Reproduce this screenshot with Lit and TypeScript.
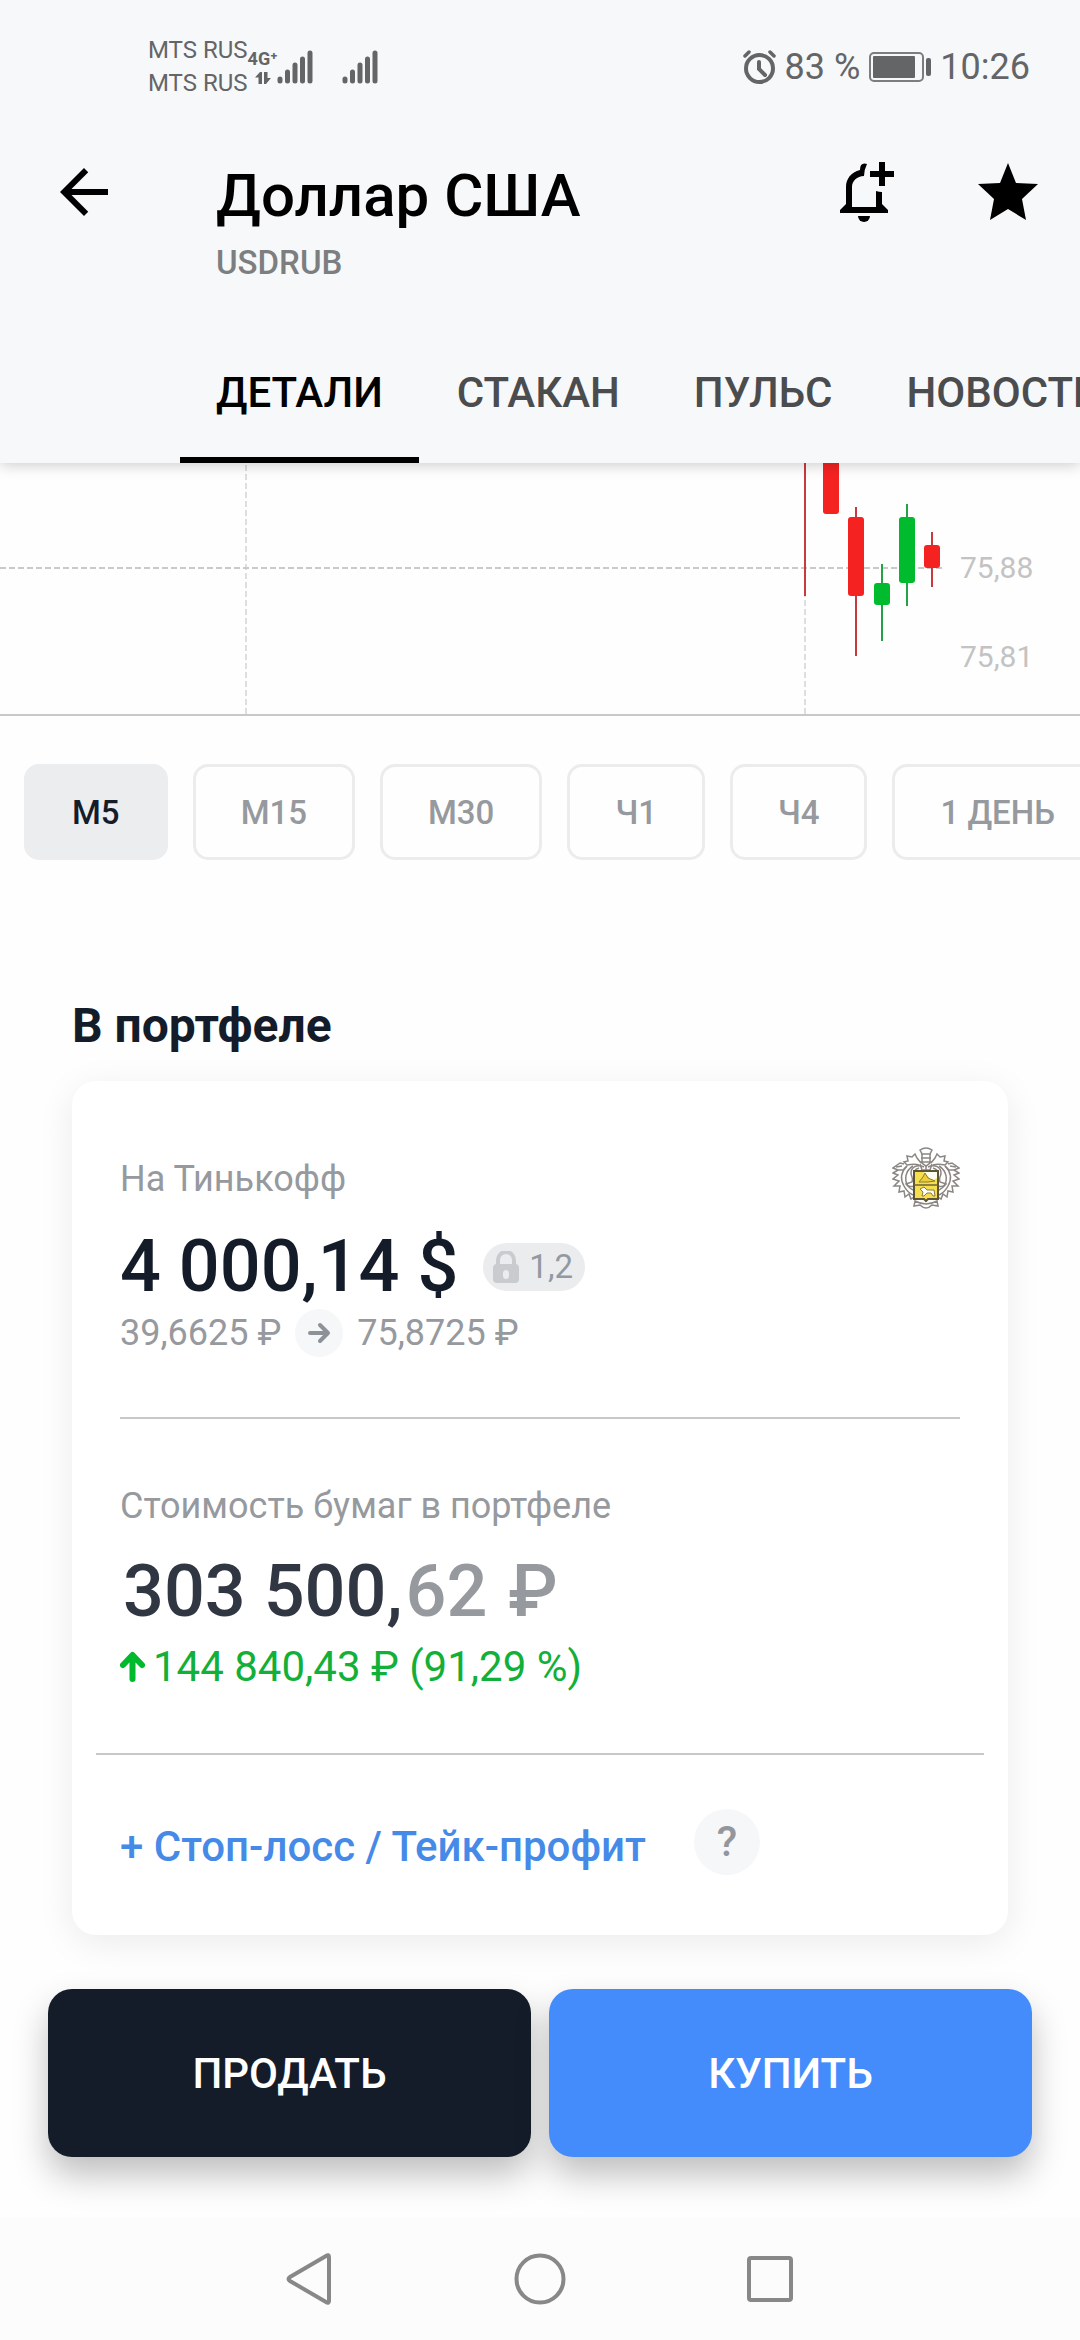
import { LitElement, html, svg, css } from 'lit';
import { customElement, property, state } from 'lit/decorators.js';
import { classMap } from 'lit/directives/class-map.js';

interface Candle {
  x: number;
  high: number;
  low: number;
  top?: number;
  bottom?: number;
  up?: boolean;
}

const TABS = ['ДЕТАЛИ', 'СТАКАН', 'ПУЛЬС', 'НОВОСТИ'];
const INTERVALS = ['M5', 'M15', 'M30', 'Ч1', 'Ч4', '1 ДЕНЬ'];

const CANDLES: Candle[] = [
  { x: 805, high: 0, low: 133 },
  { x: 831, high: 0, low: 40, top: -10, bottom: 51 },
  { x: 856, high: 44, low: 193, top: 54, bottom: 133 },
  { x: 882, high: 101, low: 178, top: 120, bottom: 142, up: true },
  { x: 907, high: 41, low: 143, top: 54, bottom: 120, up: true },
  { x: 932, high: 69, low: 124, top: 82, bottom: 105 },
];

const reset = css`
  *,
  *::after {
    box-sizing: border-box;
  }

  button {
    margin: 0;
    padding: 0;
    border: 0;
    background: none;
    color: inherit;
    font: inherit;
    cursor: pointer;
  }

  svg {
    display: block;
    flex: none;
  }
`;

@customElement('status-bar')
export class StatusBar extends LitElement {
  static styles = [
    reset,
    css`
      :host {
        display: flex;
        align-items: center;
        justify-content: space-between;
        height: 134px;
        padding: 0 50px 0 148px;
        color: #646567;
      }

      .side {
        display: flex;
        align-items: center;
      }

      .carriers {
        font-size: 24px;
        line-height: 33px;
      }

      .network {
        display: flex;
        flex-direction: column;
        align-items: center;
        gap: 4px;
        font-size: 18px;
        font-weight: 700;
        line-height: 18px;
      }

      .signal + .signal {
        margin-left: 29px;
      }

      .right {
        gap: 9px;
        font-size: 36px;
        line-height: 42px;
      }
    `,
  ];

  _signal() {
    return html`
      <svg class="signal" width="36" height="34" viewBox="0 0 36 34">
        <g stroke="currentColor" stroke-width="5" stroke-linecap="round">
          <path d="M3 29v2M10.500 22v9M18 15v16M25.500 9v22M33 3v28" />
        </g>
      </svg>
    `;
  }

  render() {
    return html`
      <div class="side">
        <div class="carriers">
          <div>MTS RUS</div>
          <div>MTS RUS</div>
        </div>
        <div class="network">
          <span>4G⁺</span>
          <svg width="16" height="12" viewBox="0 0 16 12" fill="currentColor">
            <path d="M0 5.500 5 0h2v12H3.500V5.500zM9 0h3.500v6H16l-5 6H9z" />
          </svg>
        </div>
        ${this._signal()} ${this._signal()}
      </div>
      <div class="side right">
        <svg width="33" height="34" viewBox="0 0 33 34" fill="none" stroke="currentColor">
          <circle cx="16.500" cy="18.500" r="13.500" stroke-width="4" />
          <path d="M16 12v7l6 6" stroke-width="4" stroke-linecap="round" />
          <path d="M2 6l4-4M31 6l-4-4" stroke-width="3.500" stroke-linecap="round" />
        </svg>
        <span>83 %</span>
        <svg width="62" height="30" viewBox="0 0 62 30" fill="none">
          <rect x="1" y="1" width="53" height="28" rx="4" stroke="#7c7d7f" stroke-width="2" />
          <rect x="4" y="4" width="42" height="22" rx="1" fill="currentColor" />
          <rect x="57" y="6" width="5" height="18" rx="2" fill="currentColor" />
        </svg>
        <span>10:26</span>
      </div>
    `;
  }
}

@customElement('price-chart')
export class PriceChart extends LitElement {
  @property({ attribute: false }) candles: Candle[] = [];

  static styles = [
    reset,
    css`
      :host {
        display: block;
      }

      .plot {
        width: 100%;
        height: auto;
      }

      .grid {
        stroke: #c9c9c9;
        stroke-width: 2;
        stroke-dasharray: 6 3;
      }

      .grid.vertical {
        stroke: #dedede;
      }

      .axis {
        stroke: #c8c8c8;
        stroke-width: 2;
      }

      .label {
        fill: #c3c3c3;
        font-size: 30px;
      }

      .wick {
        stroke: #c93a3c;
        stroke-width: 2;
      }

      .body {
        fill: #f52222;
      }

      .up .wick {
        stroke: #23a345;
      }

      .up .body {
        fill: #00bb2d;
      }
    `,
  ];

  _candle(c: Candle) {
    return svg`
      <g class=${classMap({ up: !!c.up })}>
        <line class="wick" x1=${c.x} x2=${c.x} y1=${c.high} y2=${c.low} />
        ${c.top !== undefined && c.bottom !== undefined
          ? svg`<rect class="body" x=${c.x - 8} y=${c.top} width="16" height=${c.bottom - c.top} rx="3" />`
          : ''}
      </g>
    `;
  }

  render() {
    return html`
      <svg class="plot" viewBox="0 0 1080 253">
        <line class="grid vertical" x1="246" x2="246" y1="2" y2="252" />
        <line class="grid vertical" x1="805" x2="805" y1="2" y2="252" />
        <line class="grid" x1="0" x2="942" y1="105" y2="105" />
        ${this.candles.map(c => this._candle(c))}
        <text class="label" x="960" y="115">75,88</text>
        <text class="label" x="960" y="204">75,81</text>
        <line class="axis" x1="0" x2="1080" y1="252" y2="252" />
      </svg>
    `;
  }
}

@customElement('bank-crest')
export class BankCrest extends LitElement {
  static styles = [
    reset,
    css`
      :host {
        display: block;
      }
    `,
  ];

  render() {
    // the mantling is symmetric, so only the left half is described
    const half = svg`
      <path d="M32 20c-7-3-13 0-13 6 0 4 3 5 1 9l-6 2c2 3 5 3 8 2" />
      <path d="M29 16l-4-5-2-4-3 3-5-1 1 5-4 1 3 3c5-1 9-1 12 0" />
      <path d="M12 17l-4-1-7 5 5 2h5l4-4M6 23l-5 3 5 2-5 4 6 2-5 5 6 0-1 6 5-1 1 6 4-3 2 5 3-2" />
      <path d="M15 19c-6 6-7 13-3 20 2 4 5 7 9 9M21 19c-8 5-9 14-5 20 1 2 3 3 5 4" />
      <path d="M27 21c-4 1-6 4-4 7M4 20l6-1" />
    `;
    return html`
      <svg width="68" height="64" viewBox="0 0 68 64" fill="none" stroke="#8b8682" stroke-width="1.500">
        ${half}
        <g transform="translate(68 0) scale(-1 1)">${half}</g>
        <path d="M28 3q6-4 12 0l-2 4v9l-4 3-4-3V7zM29 7h10M29 11h10M28 15h12" />
        <path d="M28 17l2 6h8l2-6M34 18v5" />
        <path d="M23 54l-1 5 6-1q6 6 12 0l6 1-1-5q-11 6-22 0z" />
        <path d="M22 24h24v28H36l-2 2-2-2H22z" fill="#f5df4d" stroke="#5d5337" stroke-width="2" />
        <path d="M32 25h13v6l-5 3z" fill="#fffdf0" stroke="none" />
        <path d="M22 38h24" stroke="#6c6038" />
        <path d="M27 35l4-5 2-4 3 5 7 3-7 1z" fill="#f0cf36" stroke="#8a7a3a" stroke-width="1" />
        <path d="M28 42l4-2 3 3h7l1 6h-2l-2-3h-4l-3 3h-2l1-4z" fill="#fff" stroke="#8a7a3a" stroke-width="1" />
      </svg>
    `;
  }
}

@customElement('portfolio-card')
export class PortfolioCard extends LitElement {
  static styles = [
    reset,
    css`
      :host {
        display: block;
        padding: 77px 48px 60px;
        border-radius: 24px;
        background: #fff;
        box-shadow: 0 8px 36px rgba(0, 0, 0, 0.08);
        color: #9299a2;
      }

      .head,
      .amount-row,
      .rates,
      .profit,
      .orders {
        display: flex;
        align-items: center;
      }

      .head {
        justify-content: space-between;
        height: 42px;
      }

      .label {
        color: #96999e;
        font-size: 36px;
        line-height: 42px;
      }

      .amount-row {
        gap: 25px;
        margin-top: 25px;
      }

      .amount {
        color: #141c2a;
        font-size: 72px;
        font-weight: 500;
        line-height: 84px;
      }

      .total {
        margin-top: 23px;
        color: #303642;
      }

      .part {
        padding-left: 3px;
      }

      .part.light {
        color: #96999e;
      }

      .blocked {
        display: flex;
        align-items: center;
        gap: 10px;
        height: 48px;
        padding: 0 12px 0 10px;
        border-radius: 24px;
        background: #ebecee;
        font-size: 33px;
        line-height: 40px;
      }

      .rates {
        gap: 14px;
        color: #96999e;
        font-size: 36px;
        line-height: 42px;
      }

      .arrow {
        display: grid;
        place-items: center;
        width: 48px;
        height: 48px;
        border-radius: 50%;
        background: #f6f7f9;
      }

      .divider {
        height: 2px;
        margin: 60px 0 66px;
        border: 0;
        background: #c8c8c8;
      }

      .divider.wide {
        margin: 62px -24px 54px;
      }

      .profit {
        gap: 8px;
        margin-top: 9px;
        color: #12b038;
        font-size: 42px;
        line-height: 48px;
      }

      .orders {
        gap: 48px;
      }

      .link {
        padding-top: 10px;
        color: #468ae8;
        font-size: 42px;
        font-weight: 500;
        line-height: 48px;
        text-decoration: none;
      }

      .help {
        width: 66px;
        height: 66px;
        border-radius: 50%;
        background: #f6f7f9;
        color: #93979d;
        font-size: 42px;
        font-weight: 500;
        line-height: 48px;
      }
    `,
  ];

  render() {
    return html`
      <div class="head">
        <span class="label">На Тинькофф</span>
        <bank-crest></bank-crest>
      </div>
      <div class="amount-row">
        <span class="amount">4 000,14 $</span>
        <span class="blocked">
          <svg width="26" height="32" viewBox="0 0 26 32" fill="none">
            <path d="M5 15V9a8 8 0 0 1 16 0v6" stroke="#c9cbce" stroke-width="4" />
            <path
              d="M4 13h18q4 0 4 4v11q0 4-4 4H4q-4 0-4-4V17q0-4 4-4zm9 6a3 3.500 0 0 0-3 3.500v2a3 3.500 0 0 0 6 0v-2a3 3.500 0 0 0-3-3.500z"
              fill="#c9cbce"
              fill-rule="evenodd"
            />
          </svg>
          1,2
        </span>
      </div>
      <div class="rates">
        <span>39,6625 ₽</span>
        <span class="arrow">
          <svg width="24" height="22" viewBox="0 0 24 22" fill="none" stroke="#8d9299" stroke-width="4">
            <path d="M3 11h18M13 3l8 8-8 8" stroke-linecap="round" stroke-linejoin="round" />
          </svg>
        </span>
        <span>75,8725 ₽</span>
      </div>
      <hr class="divider" />
      <div class="label">Стоимость бумаг в портфеле</div>
      <div class="amount total">
        <span class="part">303 500,</span><span class="part light">62 </span
        ><span class="part light">₽</span>
      </div>
      <div class="profit">
        <svg width="25" height="32" viewBox="0 0 25 32" fill="none" stroke="#00b92d" stroke-width="6">
          <path d="M12.500 28V5M3 14l9.500-10L22 14" stroke-linecap="round" stroke-linejoin="round" />
        </svg>
        <span>144 840,43 ₽ (91,29 %)</span>
      </div>
      <hr class="divider wide" />
      <div class="orders">
        <a class="link" href="#orders">+ Стоп-лосс / Тейк-профит</a>
        <button class="help">?</button>
      </div>
    `;
  }
}

@customElement('app-root')
export class AppRoot extends LitElement {
  @state() _tab = TABS[0];

  @state() _interval = INTERVALS[0];

  static styles = [
    reset,
    css`
      :host {
        display: flex;
        flex-direction: column;
        min-height: 100vh;
        overflow: hidden;
        background: #fefefe;
        font-family: Roboto, 'Noto Sans', sans-serif;
      }

      .header {
        position: relative;
        background: #f7f8fa;
        box-shadow: 0 2px 14px rgba(0, 0, 0, 0.2);
      }

      .toolbar {
        display: flex;
        align-items: flex-start;
        padding: 22px 36px 44px 48px;
      }

      .titles {
        flex: 1;
        padding: 4px 0 0 96px;
      }

      .title {
        margin: 0;
        color: #000;
        font-size: 60px;
        font-weight: 500;
        line-height: 72px;
      }

      .ticker {
        margin-top: 11px;
        color: #7d7e80;
        font-size: 33px;
        font-weight: 500;
        line-height: 40px;
      }

      .tools {
        display: flex;
        gap: 72px;
      }

      .tabs {
        display: flex;
        gap: 2px;
        padding-left: 180px;
      }

      .tab {
        flex: none;
        padding: 42px 36px 40px;
        border-bottom: 6px solid transparent;
        color: #4b4c4e;
        font-size: 42px;
        font-weight: 500;
        line-height: 48px;
      }

      .tab.active {
        border-color: #000;
        color: #000;
      }

      .intervals {
        display: flex;
        gap: 25px;
        padding: 48px 24px 0;
      }

      .interval {
        flex: none;
        height: 96px;
        padding: 0 45px;
        border: 3px solid #ececed;
        border-radius: 15px;
        color: #96999d;
        font-size: 33px;
        font-weight: 500;
      }

      .interval.active {
        border-color: #ebedef;
        background: #ebedef;
        color: #151c2a;
      }

      .portfolio {
        padding: 138px 72px 0;
      }

      .heading {
        margin: 0 0 27px;
        color: #141c2a;
        font-size: 48px;
        font-weight: 700;
        line-height: 56px;
      }

      .actions {
        display: grid;
        grid-template-columns: 1fr 1fr;
        gap: 18px;
        padding: 54px 48px 60px;
      }

      .action {
        height: 168px;
        border-radius: 24px;
        background: #141c2a;
        box-shadow: 0 18px 34px rgba(0, 0, 0, 0.25);
        color: #fff;
        font-size: 42px;
        font-weight: 500;
      }

      .action.buy {
        background: #448cfb;
      }

      .system {
        position: relative;
        display: flex;
        align-items: center;
        justify-content: center;
        gap: 178px;
        height: 122px;
        margin-top: auto;
        background: #fcfcfc;
      }
    `,
  ];

  render() {
    return html`
      <header class="header">
        <status-bar></status-bar>
        <div class="toolbar">
          <button aria-label="Назад">
            <svg width="72" height="72" viewBox="0 0 24 24">
              <path d="M20 11H7.830l5.590-5.590L12 4l-8 8 8 8 1.410-1.410L7.830 13H20z" />
            </svg>
          </button>
          <div class="titles">
            <h1 class="title">Доллар США</h1>
            <div class="ticker">USDRUB</div>
          </div>
          <div class="tools">
            <button aria-label="Уведомление">
              <svg width="72" height="72" viewBox="0 0 72 72">
                <path d="M51 6h6v9h9v6h-9v9h-6v-9h-9v-6h9z" />
                <path
                  d="M39 8q-7-2-7 6C23 16 18 23 18 31v17l-6 6v3h48v-3l-6-6V36q-3 0-6-1v16H24V31c0-6 5-11 12-11q0-6 3-12z"
                />
                <path d="M30 60h12a6 6 0 0 1-12 0z" />
              </svg>
            </button>
            <button aria-label="Избранное">
              <svg width="72" height="72" viewBox="0 0 72 72">
                <path d="M36 7l8 20 22 1-16 15 4 21-18-11-18 11 4-21L6 28l22-1z" />
              </svg>
            </button>
          </div>
        </div>
        <nav class="tabs">
          ${TABS.map(
            tab => html`
              <button
                class=${classMap({ tab: true, active: tab === this._tab })}
                @click=${() => (this._tab = tab)}
              >
                ${tab}
              </button>
            `
          )}
        </nav>
      </header>
      <main>
        <price-chart .candles=${CANDLES}></price-chart>
        <div class="intervals">
          ${INTERVALS.map(
            item => html`
              <button
                class=${classMap({ interval: true, active: item === this._interval })}
                @click=${() => (this._interval = item)}
              >
                ${item}
              </button>
            `
          )}
        </div>
        <section class="portfolio">
          <h2 class="heading">В портфеле</h2>
          <portfolio-card></portfolio-card>
        </section>
        <div class="actions">
          <button class="action">ПРОДАТЬ</button>
          <button class="action buy">КУПИТЬ</button>
        </div>
      </main>
      <nav class="system">
        <button aria-label="Назад">
          <svg width="52" height="52" viewBox="0 0 52 52" fill="none" stroke="#888" stroke-width="4">
            <path d="M45 4v44q0 3-3 1L6 28q-3-2 0-4L42 3q3-2 3 1z" />
          </svg>
        </button>
        <button aria-label="Домой">
          <svg width="52" height="52" viewBox="0 0 52 52" fill="none" stroke="#888" stroke-width="4">
            <circle cx="26" cy="26" r="23.500" />
          </svg>
        </button>
        <button aria-label="Недавние">
          <svg width="52" height="52" viewBox="0 0 52 52" fill="none" stroke="#888" stroke-width="4">
            <rect x="5" y="5" width="42" height="42" rx="2" />
          </svg>
        </button>
      </nav>
    `;
  }
}
